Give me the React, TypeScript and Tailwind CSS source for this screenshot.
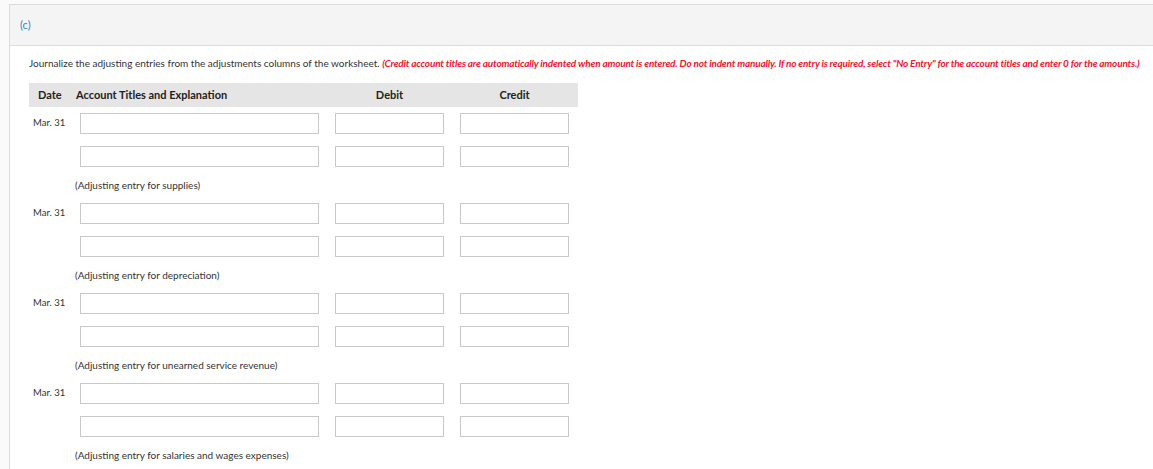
import React from 'react';

const groups = [
  '(Adjusting entry for supplies)',
  '(Adjusting entry for depreciation)',
  '(Adjusting entry for unearned service revenue)',
  '(Adjusting entry for salaries and wages expenses)',
];

function Box({ width }: { width: string }) {
  return <div className={`${width} h-[21px] border border-[#c9c9c9] bg-white shrink-0`} />;
}

function EntryRow({ date }: { date?: string }) {
  return (
    <div className="flex items-center">
      <div className="w-[51px] pl-[4px] text-[9.5px] text-[#333]">{date}</div>
      <Box width="w-[239px]" />
      <div className="w-[16px]" />
      <Box width="w-[109px]" />
      <div className="w-[16px]" />
      <Box width="w-[109px]" />
    </div>
  );
}

export default function App() {
  return (
    <div className="w-full h-[469px] overflow-hidden bg-[#fafafa] pt-[4px] pl-[9px]" style={{ fontFamily: 'Lato, "Open Sans", sans-serif' }}>
      <div className="h-full bg-white border-l border-t border-[#dcdcdc]">
        {/* Header */}
        <div className="h-[41px] bg-[#f4f4f4] border-b border-[#dcdcdc] flex items-center pl-[10px]">
          <span className="text-[11px] text-[#2e86c8]">(c)</span>
        </div>

        <div className="pl-[19px] pt-[12px]">
          <p className="h-[11px] leading-[11px] text-[10px] text-[#333] whitespace-nowrap">
            Journalize the adjusting entries from the adjustments columns of the worksheet.{' '}
            <span className="italic font-bold text-[#f0142f] tracking-[-0.18px]">
              (Credit account titles are automatically indented when amount is entered. Do not indent manually. If no entry is required, select "No Entry" for the account titles and enter 0 for the amounts.)
            </span>
          </p>

          <div className="w-[549px] mt-[14px]">
            <div className="h-[24px] bg-[#e5e5e5] flex items-center text-[11px] font-bold text-[#222]">
              <div className="w-[47px] pl-[9px]">Date</div>
              <div className="w-[243px]">Account Titles and Explanation</div>
              <div className="w-[125px] pl-[16px] text-center">Debit</div>
              <div className="w-[125px] pl-[16px] text-center">Credit</div>
            </div>

            <div className="pt-[6px]">
              {groups.map((caption) => (
                <div key={caption}>
                  <EntryRow date="Mar. 31" />
                  <div className="h-[12px]" />
                  <EntryRow />
                  <div className="h-[36px] flex items-center pl-[46px] text-[10px] text-[#333]">{caption}</div>
                </div>
              ))}
            </div>
          </div>
        </div>
      </div>
    </div>
  );
}
